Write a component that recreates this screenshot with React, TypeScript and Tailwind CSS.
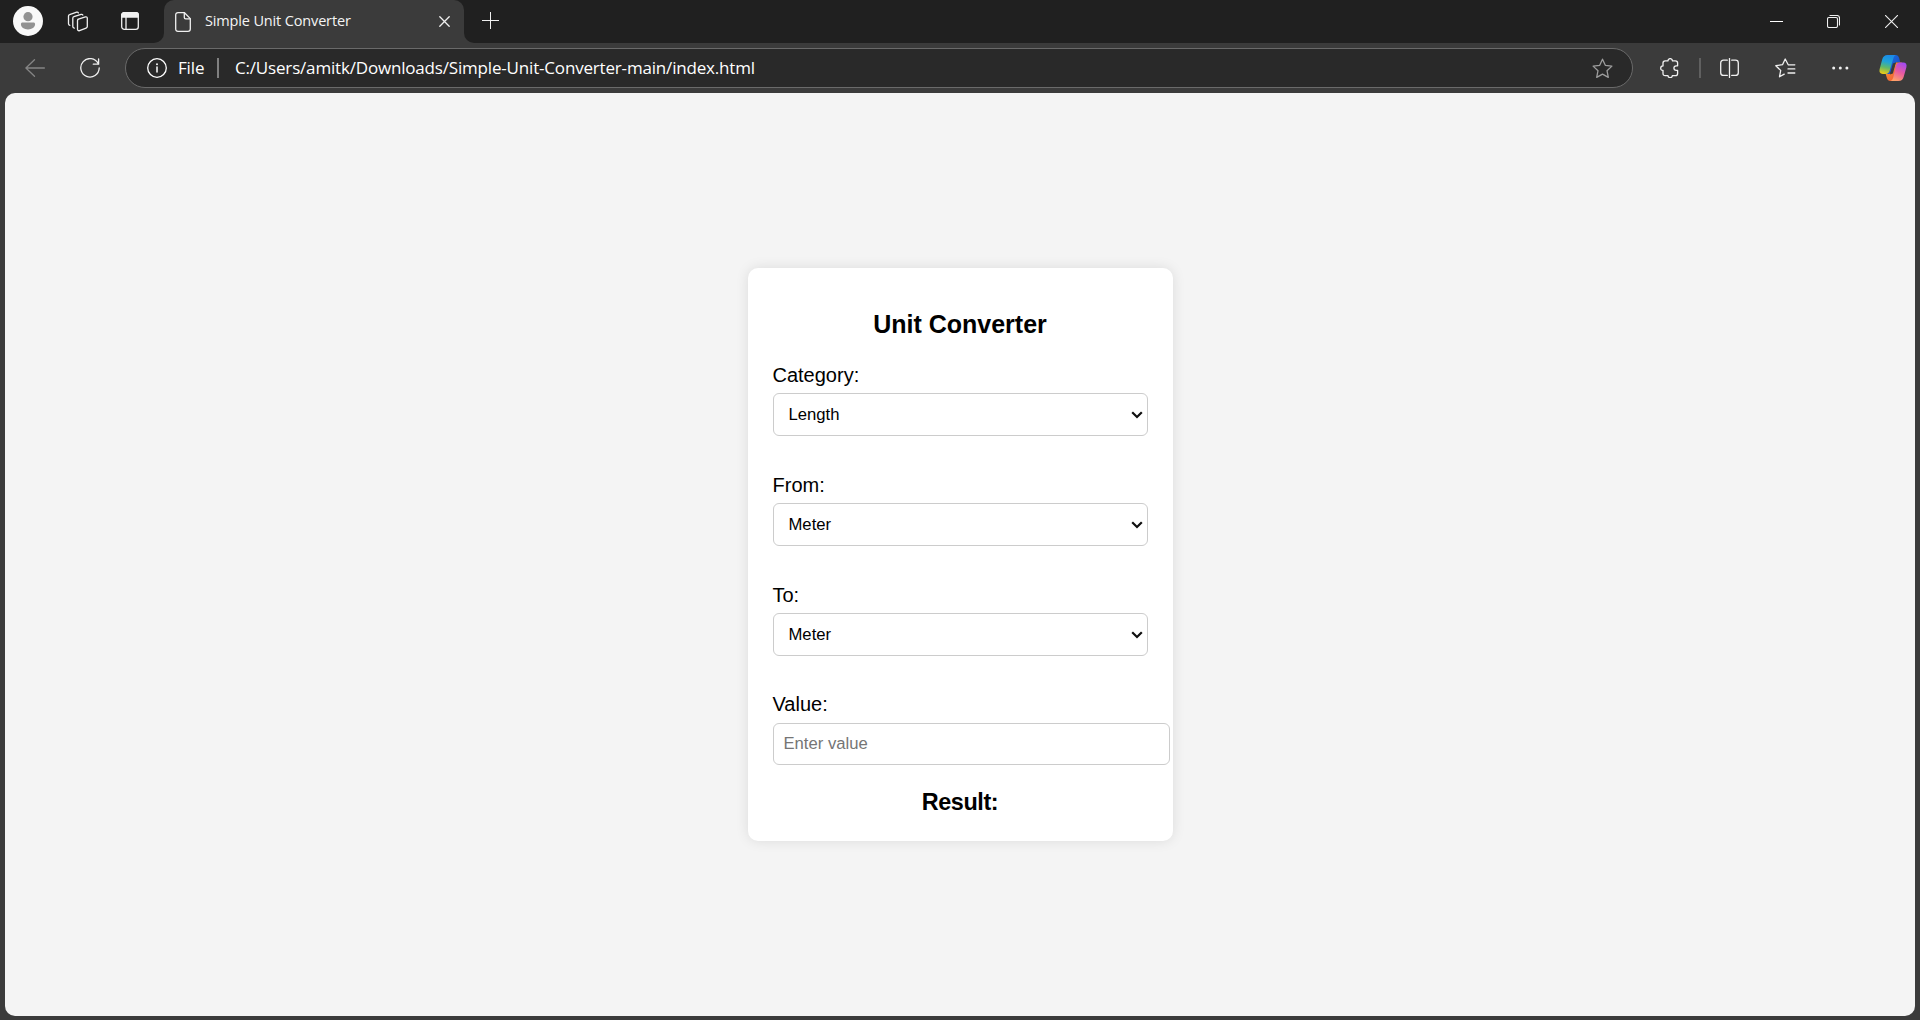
import React from "react";

type IconProps = { box: string; className: string; children: React.ReactNode };

function Icon({ box, className, children }: IconProps) {
  return (
    <svg
      viewBox={box}
      className={`block shrink-0 ${className}`}
      fill="none"
      stroke="currentColor"
      strokeWidth={1.3}
      strokeLinecap="round"
      strokeLinejoin="round"
    >
      {children}
    </svg>
  );
}

function TabStrip() {
  return (
    <div className="flex h-[43px] bg-[#202020] text-[#f0f0f0]">
      <Icon box="0 0 30 30" className="ml-[13px] mt-[6px] h-[30px] w-[30px]">
        <circle cx="15" cy="15" r="15" fill="#f9f9f9" stroke="none" />
        <circle cx="15" cy="10.7" r="4.6" fill="#929292" stroke="none" />
        <path d="M9.6 16.4h10.8c1 0 1.7.7 1.7 1.7 0 3.400-3.200 5.400-7.100 5.400s-7.100-2-7.100-5.400c0-1 .7-1.700 1.700-1.700z" fill="#929292" stroke="none" />
      </Icon>
      <Icon box="0 0 22 22" className="ml-[24px] mt-[10px] h-[22px] w-[22px]">
        <path d="M10.700 9.300l7.700-2.400c1-.3 1.900.3 1.900 1.300v8.300c0 .8-.4 1.300-1.200 1.600l-6.600 2.500c-1.100.4-2-.2-2-1.300v-8.700c0-.7.300-1.100.9-1.300z" />
        <path d="M7.300 18.100c-1-.1-1.500-.6-1.500-1.500V8.200c0-.8.4-1.300 1.100-1.500l7.200-2.300c.8-.2 1.400 0 1.700.7" />
        <path d="M2.900 15.300c-.9-.1-1.400-.7-1.400-1.500V6.100c0-.8.4-1.300 1.100-1.500l7.100-2.400c.8-.2 1.400 0 1.700.7" />
      </Icon>
      <Icon box="0 0 18 18" className="ml-[32px] mt-[12px] h-[18px] w-[18px]">
        <rect x=".7" y=".7" width="16.600" height="16.600" rx="2.600" />
        <path d="M.7 5V3C.7 1.700 1.700.7 3 .7h12c1.300 0 2.300 1 2.300 2.300v2z" fill="currentColor" />
        <path d="M5 5v12" />
      </Icon>
      <div className="flex w-[14px] bg-[#3b3b3b] ml-[11px]">
        <div className="w-full rounded-br-[10px] bg-[#202020]" />
      </div>
      <div className="bg-[#202020]">
        <div className="flex h-[43px] w-[300px] rounded-t-[10px] bg-[#3b3b3b]">
          <Icon box="0 0 16 20" className="ml-[11px] mt-[12px] h-[20px] w-[16px]">
            <path d="M3 .7h6.500l5.800 5.900v10.400c0 1.400-.9 2.300-2.300 2.300H3C1.600 19.300.7 18.400.7 17V3C.7 1.600 1.600.7 3 .7z" />
            <path d="M9.300.9v4.600c0 .9.500 1.400 1.400 1.400h4.500" />
          </Icon>
          <span className="ml-[14px] mt-[10px] w-[160px] shrink-0 whitespace-nowrap font-['Open_Sans',sans-serif] text-[14.500px] leading-[22px] tracking-[-0.15px] text-[#f4f4f4]">
            Simple Unit Converter
          </span>
          <Icon box="0 0 11 11" className="ml-[74px] mt-[16px] h-[11px] w-[11px]">
            <path d="M.8.8l9.400 9.400M10.200.8L.8 10.200" />
          </Icon>
        </div>
      </div>
      <div className="w-[14px] bg-[#3b3b3b]">
        <div className="h-full rounded-bl-[10px] bg-[#202020]" />
      </div>
      <Icon box="0 0 17 17" className="ml-[4px] mt-[12px] h-[17px] w-[17px]">
        <path d="M8.500 0v17M0 8.500h17" strokeWidth={1} strokeLinecap="butt" />
      </Icon>
      <div className="ml-auto flex">
        <Icon box="0 0 13 13" className="mr-[44px] mt-[15px] h-[13px] w-[13px]">
          <path d="M0 6.500h13" strokeWidth={1} strokeLinecap="butt" stroke="#fff" />
        </Icon>
        <Icon box="0 0 13 13" className="mr-[45px] mt-[15px] h-[13px] w-[13px]">
          <rect x=".5" y="2.500" width="10" height="10" rx="1.500" strokeWidth={1.100} />
          <path d="M3 .5h7c1.500 0 2.500 1 2.500 2.500v7" strokeWidth={1.100} />
        </Icon>
        <Icon box="0 0 13 13" className="mr-[22px] mt-[15px] h-[13px] w-[13px]">
          <path d="M.3.3l12.400 12.400M12.700.3L.3 12.700" strokeWidth={1.100} />
        </Icon>
      </div>
    </div>
  );
}

function CopilotLogo() {
  return (
    <svg viewBox="0 0 28 26" className="block h-[26px] w-[28px] shrink-0">
      <defs>
        <linearGradient id="cpLeft" x1=".5" y1="0" x2=".3" y2="1">
          <stop offset="0" stopColor="#1b8be8" />
          <stop offset=".35" stopColor="#1fa3d8" />
          <stop offset=".65" stopColor="#5fb96a" />
          <stop offset="1" stopColor="#f0cb14" />
        </linearGradient>
        <linearGradient id="cpTop" x1="0" y1="0" x2="1" y2="1">
          <stop offset="0" stopColor="#1778e0" />
          <stop offset="1" stopColor="#1d3fc4" />
        </linearGradient>
        <linearGradient id="cpRight" x1=".7" y1="0" x2=".3" y2="1">
          <stop offset="0" stopColor="#a44af0" />
          <stop offset=".5" stopColor="#e95aa0" />
          <stop offset="1" stopColor="#ffa268" />
        </linearGradient>
        <linearGradient id="cpBottom" x1="0" y1="0" x2="1" y2="1">
          <stop offset="0" stopColor="#f9a02b" />
          <stop offset="1" stopColor="#ee4a3c" />
        </linearGradient>
      </defs>
      <path d="M9 0h7.500c2 0 3 1 3.600 3l1.200 4.500h-3.800c-2 0-3 .9-3.600 2.800L11 19H5z" fill="url(#cpTop)" />
      <path d="M19 26h-7.500c-2 0-3-1-3.600-3l-1.200-4h3.500c2 0 3-1 3.600-2.800l3.100-8.700h6z" fill="url(#cpBottom)" />
      <path d="M8.600 0h8.200c-1.400.6-2 1.900-2.600 3.900l-3.400 11.300c-.8 2.600-2 3.800-4.300 3.800H3.800C1 19 0 17 .6 14.300L3.200 4.600C4 1.600 5.600 0 8.600 0z" fill="url(#cpLeft)" />
      <path d="M19.400 26h-7.600c1.400-.6 2-1.900 2.600-3.900l2.400-10.800c.8-2.600 2-3.800 4.300-3.800h3.100c2.800 0 3.800 2 3.200 4.700l-2.600 9.200c-.8 3-2.400 4.600-5.400 4.600z" fill="url(#cpRight)" />
      <path d="M13.900 8.500l2.900-1-2.900 11-2.900 1z" fill="#3b3b3b" />
    </svg>
  );
}

function AddressBar() {
  return (
    <div className="flex h-[40px] w-[1508px] shrink-0 items-center rounded-full border border-[#6a6a6a] bg-[#292929] text-[#ffffff]">
      <Icon box="0 0 20 20" className="ml-[21px] h-[20px] w-[20px]">
        <circle cx="10" cy="10" r="9.300" />
        <path d="M10 9v5" strokeWidth={1.500} />
        <circle cx="10" cy="6.300" r=".95" fill="currentColor" stroke="none" />
      </Icon>
      <span className="-mt-px ml-[11px] w-[39px] whitespace-nowrap font-['Open_Sans',sans-serif] text-[17px] leading-[22px] tracking-[-0.16px]">File</span>
      <span className="h-[20px] w-[2px] bg-[#808080]" />
      <span className="-mt-px ml-[16px] whitespace-nowrap font-['Open_Sans',sans-serif] text-[17px] leading-[22px] tracking-[-0.18px]">
        C:/Users/amitk/Downloads/Simple-Unit-Converter-main/index.html
      </span>
      <Icon box="0 0 21 21" className="ml-auto mr-[19px] h-[21px] w-[21px] text-[#9d9d9d]">
        <path d="M10.500 1.200l2.800 6.100 6.600.8-4.900 4.600 1.300 6.700-5.800-3.300-5.800 3.300L6 12.700 1.100 8.100l6.600-.8z" />
      </Icon>
    </div>
  );
}

function Toolbar() {
  return (
    <div className="flex h-[50px] items-center bg-[#3b3b3b] text-[#f0f0f0]">
      <Icon box="0 0 20 18" className="ml-[25px] h-[18px] w-[20px] text-[#858585]">
        <path d="M9.500.8L.9 9l8.600 8.200M.9 9h18.500" />
      </Icon>
      <Icon box="0 0 20 20" className="ml-[35px] h-[20px] w-[20px]">
        <path d="M18.200 5.600A9.200 9.200 0 1 0 19.200 10" />
        <path d="M18.600.9v5.300h-5.300" />
      </Icon>
      <div className="ml-[25px]">
        <AddressBar />
      </div>
      <Icon box="0 0 19 20" className="ml-[27px] h-[20px] w-[19px]">
        <path d="M5.200 2.900h2.700c.1-1.400.8-2.300 2.300-2.300s2.200.9 2.300 2.300h2.900c1.400 0 2.200.8 2.200 2.200v2.700h-1.300c-1.500 0-2.400.9-2.400 2.300s.9 2.300 2.400 2.300h1.300v3.100c0 1.400-.8 2.200-2.200 2.200h-3.100c-.1 1.200-.7 1.900-2.100 1.900s-2.100-.7-2.200-1.900H5.200c-1.400 0-2.200-.8-2.200-2.200v-3.200C1.500 12.500.7 11.600.7 10.200S1.500 8 3 7.900V5.100c0-1.400.8-2.200 2.200-2.200z" />
      </Icon>
      <span className="ml-[20px] h-[20px] w-[2px] bg-[#606060]" />
      <Icon box="0 0 19 20" className="ml-[19px] h-[20px] w-[19px]">
        <path d="M9.500.6v18.800" />
        <path d="M7.300 2.200H3.500C1.800 2.200.7 3.200.7 4.900v9.800c0 1.700 1.100 2.700 2.800 2.700h3.800M11.700 2.200h3.800c1.700 0 2.800 1 2.800 2.700v9.800c0 1.700-1.100 2.700-2.800 2.700h-3.800" />
      </Icon>
      <Icon box="0 0 21 20" className="ml-[36px] h-[20px] w-[21px]">
        <path d="M19.800 6.800h-6.600L10.200 1 7.500 6.700l-6.700 1 4.900 4.700-1.200 6.400 4.700-2.700" />
        <path d="M13 10.900h6.800M13 15h6.800" />
      </Icon>
      <Icon box="0 0 17 5" className="ml-[36px] h-[5px] w-[17px]">
        <g fill="currentColor" stroke="none">
          <circle cx="1.700" cy="2" r="1.500" />
          <circle cx="8.300" cy="2" r="1.500" />
          <circle cx="14.900" cy="2" r="1.500" />
        </g>
      </Icon>
      <div className="ml-[30px]">
        <CopilotLogo />
      </div>
    </div>
  );
}

function SelectField({ label, value }: { label: string; value: string }) {
  return (
    <label className="mb-[37px] block">
      <span className="block text-[20px] leading-6">{label}</span>
      <span className="relative mt-[6px] block">
        <select
          defaultValue={value}
          className="block h-[43px] w-full appearance-none rounded-[6px] border border-[#cccccc] bg-white pl-[15px] text-[16.667px] text-black"
        >
          <option>{value}</option>
        </select>
        <svg viewBox="0 0 12 8" className="pointer-events-none absolute right-[5px] top-[18px] h-[8px] w-[12px]" fill="none" stroke="#101010" strokeWidth="2.200">
          <path d="M1.200 1.200L6 6l4.800-4.800" />
        </svg>
      </span>
    </label>
  );
}

function ConverterCard() {
  return (
    <div className="h-[573px] w-[425px] rounded-[10px] bg-white px-[25px] pt-[42px] font-['Liberation_Sans',sans-serif] text-black shadow-[0_0_12.500px_rgba(0,0,0,0.1)]">
      <h2 className="mb-[25px] text-center text-[25px] font-bold leading-7">Unit Converter</h2>
      <SelectField label="Category:" value="Length" />
      <SelectField label="From:" value="Meter" />
      <SelectField label="To:" value="Meter" />
      <label className="-mt-px block">
        <span className="block text-[20px] leading-6">Value:</span>
        <input
          type="number"
          placeholder="Enter value"
          className="mt-[7px] block h-[42px] w-[397px] rounded-[6px] border border-[#cccccc] px-[10px] text-[16.667px] placeholder:text-[#757575]"
        />
      </label>
      <h3 className="mt-[23px] text-center text-[23.400px] font-bold leading-7 tracking-[-0.4px]">Result:</h3>
    </div>
  );
}

export default function App() {
  return (
    <div className="flex h-[1020px] w-[1920px] flex-col overflow-hidden bg-[#3b3b3b]">
      <TabStrip />
      <Toolbar />
      <main className="mx-[5px] flex h-[923px] justify-center rounded-[10px] bg-[#f4f4f4] pt-[175px]">
        <ConverterCard />
      </main>
    </div>
  );
}
